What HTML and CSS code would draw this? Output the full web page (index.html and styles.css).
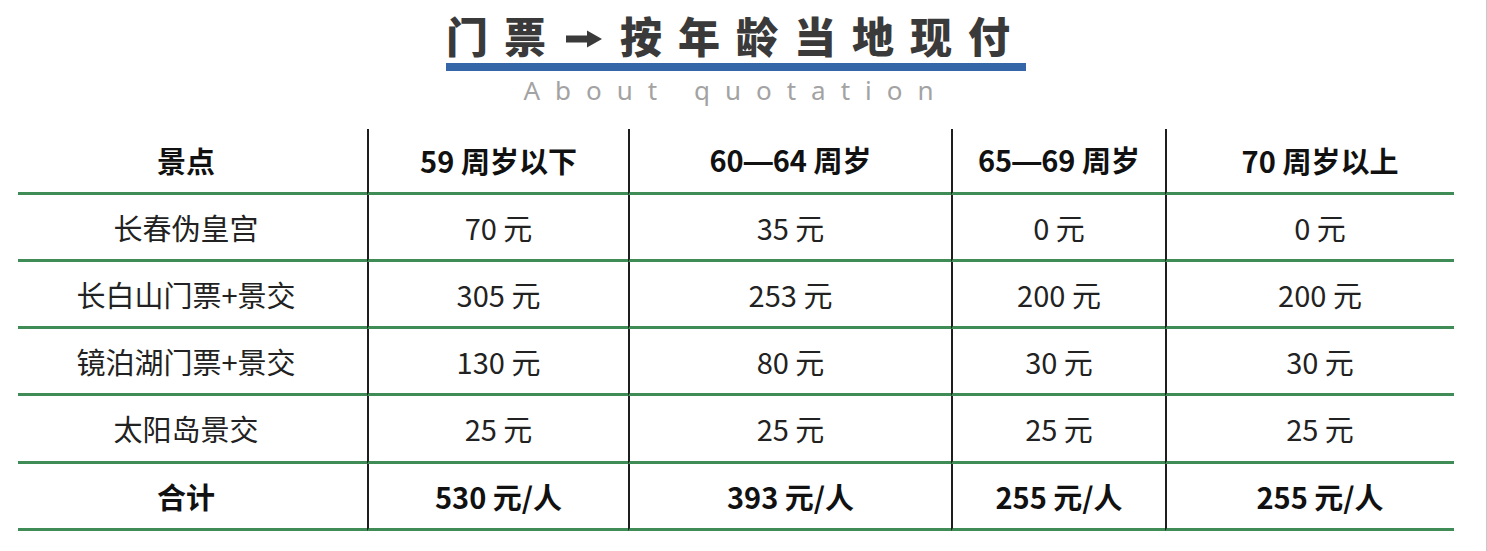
FILE: index.html
```html
<!DOCTYPE html>
<html lang="zh-CN">
<head>
<meta charset="utf-8">
<title>门票 按年龄当地现付</title>
<link rel="stylesheet" href="styles.css">
</head>
<body>
<div class="page">
  <header class="head">
    <h1 class="title">
      <span class="t">门票</span>
      <svg class="arrow" viewBox="0 0 42 50" width="42" height="50" aria-hidden="true">
        <polygon points="4,25.5 25,25.5 25,20.5 40,29 25,37.5 25,32.5 4,32.5" fill="#3a3a3a"/>
      </svg>
      <span class="t">按年龄当地现付</span>
    </h1>
    <div class="bar"></div>
    <p class="sub">About quotation</p>
  </header>

  <table class="price">
    <colgroup>
      <col class="c1"><col class="c2"><col class="c3"><col class="c4"><col class="c5">
    </colgroup>
    <thead>
      <tr class="hrow">
        <th>景点</th>
        <th>59 周岁以下</th>
        <th>60<span class="dash">—</span>64 周岁</th>
        <th>65<span class="dash">—</span>69 周岁</th>
        <th>70 周岁以上</th>
      </tr>
    </thead>
    <tbody>
      <tr>
        <td>长春伪皇宫</td><td>70 元</td><td>35 元</td><td>0 元</td><td>0 元</td>
      </tr>
      <tr>
        <td>长白山门票+景交</td><td>305 元</td><td>253 元</td><td>200 元</td><td>200 元</td>
      </tr>
      <tr>
        <td>镜泊湖门票+景交</td><td>130 元</td><td>80 元</td><td>30 元</td><td>30 元</td>
      </tr>
      <tr class="tall">
        <td>太阳岛景交</td><td>25 元</td><td>25 元</td><td>25 元</td><td>25 元</td>
      </tr>
      <tr class="total">
        <td>合计</td><td>530 元/人</td><td>393 元/人</td><td>255 元/人</td><td>255 元/人</td>
      </tr>
    </tbody>
  </table>
</div>
</body>
</html>
```

FILE: styles.css
```css
html, body {
  margin: 0;
  padding: 0;
  background: #ffffff;
}

body {
  font-family: "Noto Sans CJK SC", "Noto Sans", sans-serif;
}

.page {
  width: 1487px;
  height: 551px;
  box-sizing: border-box;
  border-right: 1px solid #c9c9c9;
  overflow: hidden;
  padding-top: 10px;
}

.head {
  width: 580px;
  margin-left: 446px;
}

.title {
  margin: 0;
  height: 50px;
  display: flex;
  align-items: center;
  font-size: 42px;
  line-height: 50px;
  font-weight: 900;
  color: #3a3a3a;
  white-space: nowrap;
}

.title .t {
  letter-spacing: 16px;
}

.arrow {
  display: block;
  flex: none;
  margin-right: 16px;
}

.bar {
  height: 8px;
  margin-top: 3px;
  background: #3566a8;
}

.sub {
  margin: 4px 0 0;
  font-family: "Noto Sans", sans-serif;
  font-size: 26px;
  line-height: 30px;
  letter-spacing: 15px;
  color: #a3a3a3;
  text-align: center;
}

.price {
  margin-top: 24px;
  margin-left: 18px;
  width: 1436px;
  table-layout: fixed;
  border-collapse: separate;
  border-spacing: 0;
  color: #1f1f1f;
}

.c1 { width: 349px; }
.c2 { width: 261px; }
.c3 { width: 323px; }
.c4 { width: 214px; }
.c5 { width: 289px; }

.price th,
.price td {
  box-sizing: border-box;
  height: 67px;
  padding: 0;
  text-align: center;
  vertical-align: middle;
  font-size: 29px;
  line-height: 1;
  border-bottom: 3px solid #3f8c57;
  white-space: nowrap;
}

.price th {
  height: 66px;
  font-weight: 700;
  color: #111111;
}

.price td {
  font-weight: 400;
  color: #222222;
}

.price .tall td {
  height: 68px;
}

.price .total td {
  font-weight: 700;
  color: #111111;
}

.price th + th,
.price td + td {
  border-left: 2px solid #1e1e1e;
}

.price th:first-child,
.price td:first-child {
  padding-right: 13px;
}

.price th:last-child,
.price td:last-child {
  padding-left: 19px;
}

.dash {
  font-family: "Liberation Sans", sans-serif;
  font-weight: 700;
}
```
